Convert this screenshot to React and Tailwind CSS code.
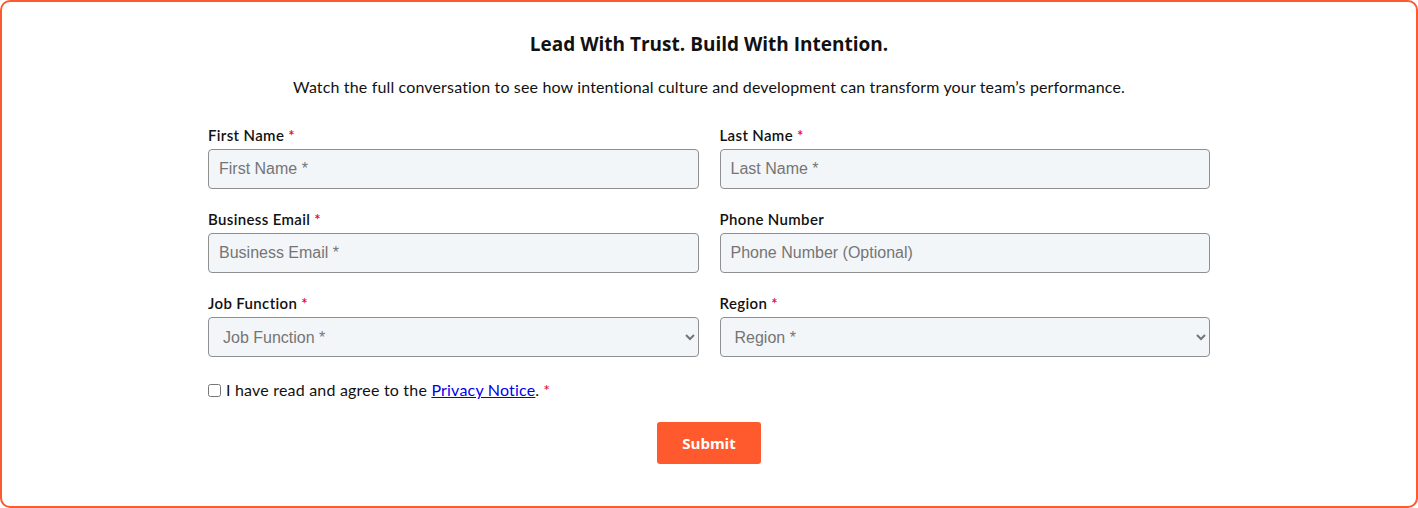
import { useState } from 'react'

const Req = () => <span className="text-[#e4002b] ml-1">*</span>

function Field({ label, required, children }) {
  return (
    <div className="flex flex-col">
      <label className="text-[15px] font-semibold leading-[22px] mb-[3px] tracking-[0.35px] text-[#111]">
        {label}
        {required && <Req />}
      </label>
      {children}
    </div>
  )
}

const inputCls =
  "h-10 w-full rounded-[4px] border border-[#8f8f8f] bg-[#f3f6f9] px-[10px] text-[16px] text-[#333] placeholder:text-[#757575] font-['Liberation_Sans',Arial,sans-serif] outline-none"

const selectCls =
  "h-10 w-full rounded-[4px] border border-[#8f8f8f] bg-[#f3f6f9] pl-[10px] pr-[6px] text-[16px] text-[#757575] font-['Liberation_Sans',Arial,sans-serif] outline-none"

export default function App() {
  const [agree, setAgree] = useState(false)

  return (
    <div className="h-[508px] bg-white font-['Lato',sans-serif]">
      <div className="h-full rounded-[10px] border-2 border-[#ff5a2e] pt-[29px] text-[#111]">
        <h2 className="text-center text-[19px] font-bold leading-[27px] font-['Open_Sans',sans-serif]">
          Lead With Trust. Build With Intention.
        </h2>
        <p className="mt-[17px] text-center text-[16px] leading-6 tracking-[0.15px]">
          Watch the full conversation to see how intentional culture and development can transform your team’s performance.
        </p>

        <form className="mx-auto mt-[25px] w-[1002px]" onSubmit={(e) => e.preventDefault()}>
          <div className="grid grid-cols-2 gap-x-[21px] gap-y-[19px]">
            <Field label="First Name" required>
              <input className={inputCls} placeholder="First Name *" />
            </Field>
            <Field label="Last Name" required>
              <input className={inputCls} placeholder="Last Name *" />
            </Field>
            <Field label="Business Email" required>
              <input className={inputCls} placeholder="Business Email *" />
            </Field>
            <Field label="Phone Number">
              <input className={inputCls} placeholder="Phone Number (Optional)" />
            </Field>
            <Field label="Job Function" required>
              <select className={selectCls} defaultValue="">
                <option value="" disabled>Job Function *</option>
              </select>
            </Field>
            <Field label="Region" required>
              <select className={selectCls} defaultValue="">
                <option value="" disabled>Region *</option>
              </select>
            </Field>
          </div>

          <div className="mt-[21px] flex items-center text-[16px] leading-6 tracking-[0.2px]">
            <input
              type="checkbox"
              checked={agree}
              onChange={(e) => setAgree(e.target.checked)}
              className="m-0 mr-[5px] h-[13px] w-[13px]"
            />
            <span>
              I have read and agree to the{' '}
              <a href="#" className="text-[#0000ee] underline">Privacy Notice</a>.
              <Req />
            </span>
          </div>

          <div className="mt-5 flex justify-center">
            <button
              type="submit"
              className="h-[42px] w-[104px] rounded-[3px] bg-[#ff5a2e] text-[15px] font-bold text-white font-['Open_Sans',sans-serif]"
            >
              Submit
            </button>
          </div>
        </form>
      </div>
    </div>
  )
}
